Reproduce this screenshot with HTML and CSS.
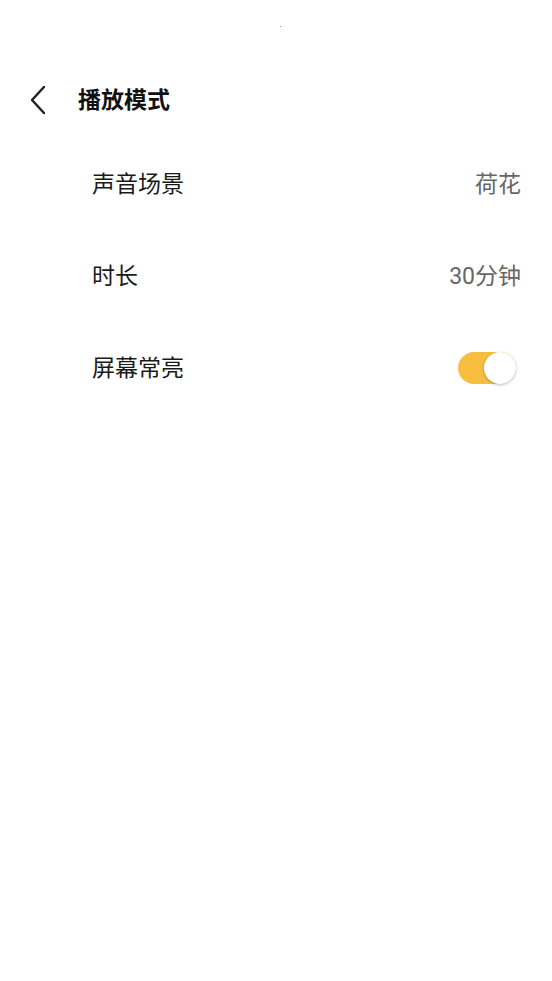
FILE: index.html
```html
<!DOCTYPE html>
<html lang="zh">
<head>
<meta charset="utf-8">
<link rel="stylesheet" href="styles.css">
</head>
<body>
<div class="page">
  <div class="status"><span class="dot"></span></div>
  <header class="header">
    <span class="back">
      <svg width="18" height="30" viewBox="0 0 18 30"><path d="M15 2 L3 15 L15 28" fill="none" stroke="#222" stroke-width="2.5" stroke-linecap="round" stroke-linejoin="round"/></svg>
    </span>
    <h1 class="title">播放模式</h1>
  </header>
  <div class="list">
    <div class="row"><span class="label">声音场景</span><span class="value">荷花</span></div>
    <div class="row"><span class="label">时长</span><span class="value">30分钟</span></div>
    <div class="row"><span class="label">屏幕常亮</span><span class="toggle"><span class="knob"></span></span></div>
  </div>
</div>
</body>
</html>
```
FILE: styles.css
```css
html, body { margin: 0; padding: 0; background: #fff; }
body { font-family: Roboto, "Noto Sans CJK SC", sans-serif; width: 552px; height: 981px; overflow: hidden; }
.page { display: flex; flex-direction: column; }
.status { height: 72px; position: relative; }
.dot { position: absolute; left: 280px; top: 26px; width: 1px; height: 1px; background: #999; }
.header { height: 56px; display: flex; align-items: center; padding-left: 29px; }
.back { display: flex; width: 18px; height: 30px; }
.title { margin: 0 0 0 31px; padding-top: 1px; font-size: 23px; font-weight: 700; color: #111; line-height: 1; }
.list { margin-top: 10px; display: flex; flex-direction: column; }
.row { height: 92px; display: flex; align-items: center; justify-content: space-between; padding: 0 31px 0 92px; }
.label { font-size: 23px; color: #1a1a1a; line-height: 1; padding-top: 1px; }
.value { font-size: 23px; color: #666; line-height: 1; padding-top: 1px; }
.toggle { width: 58px; height: 32px; border-radius: 16px; background: #f6bd3f; position: relative; margin-right: 5px; }
.knob { position: absolute; right: 0; top: 0; width: 32px; height: 32px; border-radius: 50%; background: #fff; box-shadow: 0 1px 3px rgba(0,0,0,0.25); }
```
